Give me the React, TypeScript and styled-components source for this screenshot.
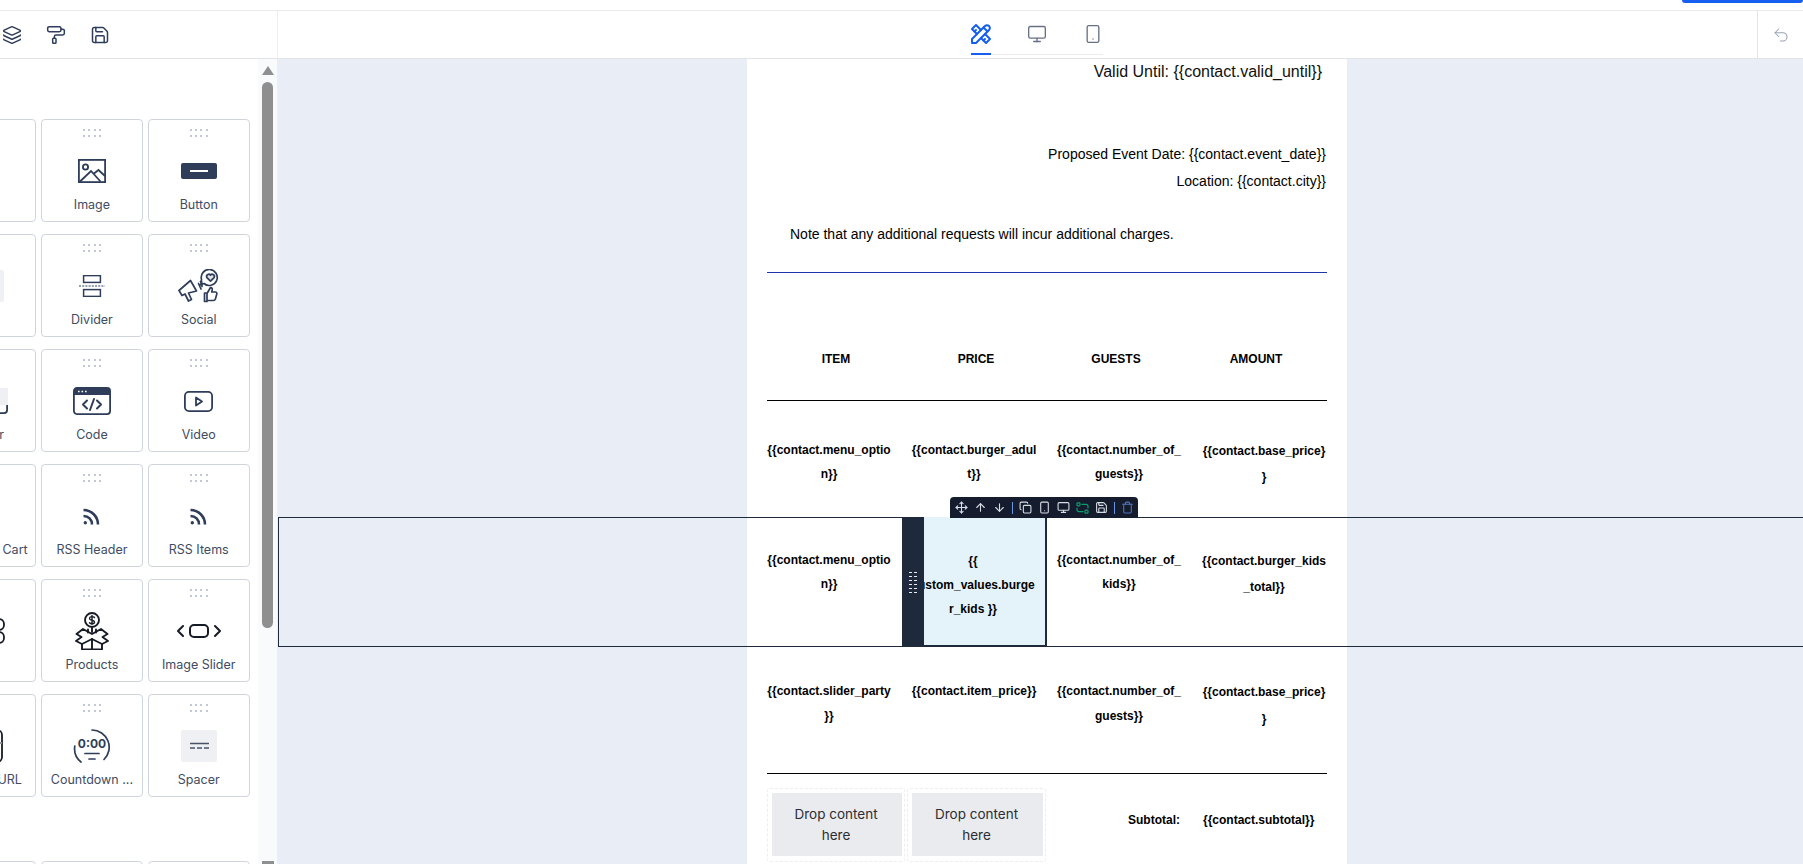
import React from "react";
import styled, { createGlobalStyle } from "styled-components";
import {
  ArrowDown,
  ArrowUp,
  Copy,
  Layers,
  Monitor,
  Move,
  PaintRoller,
  Save,
  Smartphone,
  Trash,
  Undo2,
} from "lucide-react";
import { TbTools } from "react-icons/tb";

const INK = "#2f3d5a";

const GlobalStyle = createGlobalStyle`
  html, body {
    margin: 0;
    padding: 0;
    background: #fff;
    overflow: hidden;
  }
  * {
    box-sizing: border-box;
  }
`;

const Page = styled.div`
  width: 1803px;
  height: 864px;
  display: flex;
  flex-direction: column;
  overflow: hidden;
  font-family: Inter, "Noto Sans", sans-serif;
`;

const TopStrip = styled.div`
  height: 11px;
  flex: none;
  display: flex;
  justify-content: flex-end;
  border-bottom: 1px solid #e9eaee;
`;

const PublishEdge = styled.div`
  width: 121px;
  height: 3px;
  background: #155eef;
  border-radius: 0 0 6px 6px;
`;

const Toolbar = styled.div`
  height: 48px;
  flex: none;
  display: grid;
  grid-template-columns: 278px 1fr 46px;
  border-bottom: 1px solid #e2e3e7;
`;

const LeftTools = styled.div`
  display: flex;
  align-items: center;
  gap: 24px;
  padding: 1px 0 0 2px;
  color: ${INK};
  border-right: 1px solid #eeeff2;
`;

const TabArea = styled.div`
  display: flex;
  padding-left: 693px;
`;

const TabBar = styled.div`
  height: 44px;
  display: flex;
  gap: 36px;
  border-bottom: 1px solid #eaecf0;
`;

const Tab = styled.div<{ $active?: boolean }>`
  width: 20px;
  height: 44px;
  padding-top: 3px;
  display: flex;
  align-items: center;
  justify-content: center;
  color: ${({ $active }) => ($active ? "#155eef" : "#667085")};
  border-bottom: 2px solid ${({ $active }) => ($active ? "#155eef" : "transparent")};
  & > svg {
    flex: none;
  }
`;

const UndoCell = styled.div`
  display: flex;
  align-items: center;
  justify-content: center;
  color: #98a2b3;
  border-left: 1px solid #e4e5e9;
`;

const Body = styled.div`
  flex: 1;
  min-height: 0;
  display: flex;
`;

const Sidebar = styled.aside`
  width: 278px;
  flex: none;
  display: flex;
  border-right: 1px solid #eeeff2;
`;

const Palette = styled.div`
  width: 258px;
  flex: none;
  overflow: hidden;
  padding-top: 60px;
`;

const CardGrid = styled.div`
  width: 316px;
  margin-left: -66px;
  display: grid;
  grid-template-columns: repeat(3, 102.3px);
  grid-auto-rows: 103px;
  column-gap: 4.5px;
  row-gap: 12px;
  & + & {
    margin-top: 64px;
  }
`;

const Card = styled.div`
  border: 1px solid #d0d5dd;
  border-radius: 4px;
  padding-top: 9px;
  display: flex;
  flex-direction: column;
  align-items: center;
  background: #fff;
`;

const Dots = styled.div`
  width: 18px;
  height: 8px;
  flex: none;
  display: grid;
  grid-template-columns: repeat(4, 2px);
  grid-template-rows: repeat(2, 2px);
  justify-content: space-between;
  align-content: space-between;
  & > i {
    background: #c2c8d5;
  }
`;

const IconSlot = styled.div`
  height: 52px;
  margin-top: 8px;
  flex: none;
  display: flex;
  align-items: center;
  justify-content: center;
`;

const CardLabel = styled.div`
  font-size: 12.5px;
  line-height: 16px;
  color: #414c63;
  white-space: nowrap;
`;

const GrayBlock = styled.div`
  width: 38px;
  height: 32px;
  background: #eef0f3;
  border-radius: 2px;
`;

const ScrollTrack = styled.div`
  width: 19px;
  flex: none;
  display: flex;
  flex-direction: column;
  align-items: center;
  background: #f9fafb;
  padding-top: 7px;
`;

const ArrowUpTip = styled.div`
  width: 0;
  height: 0;
  border-left: 6.5px solid transparent;
  border-right: 6.5px solid transparent;
  border-bottom: 9px solid #8f8f8f;
`;

const ScrollThumb = styled.div`
  width: 11px;
  height: 546px;
  margin-top: 7px;
  background: #8f8f8f;
  border-radius: 6px;
`;

const ScrollEnd = styled.div`
  width: 12px;
  height: 3px;
  margin-top: auto;
  background: #8f8f8f;
`;

const Canvas = styled.main`
  flex: 1;
  min-width: 0;
  overflow: hidden;
  background: #e9eef6;
`;

const Doc = styled.div`
  width: 600px;
  height: 805px;
  margin-left: 469px;
  padding-top: 1px;
  background: #fff;
  font-family: "Liberation Sans", Arial, sans-serif;
  color: #000;
`;

const ValidLine = styled.div`
  padding-right: 25px;
  text-align: right;
  font-size: 16px;
  line-height: 24px;
  color: #111;
`;

const EventBlock = styled.div`
  margin-top: 57px;
  padding-right: 21px;
  text-align: right;
  font-size: 14px;
  line-height: 27px;
`;

const Note = styled.p`
  margin: 27px 0 0;
  padding-left: 43px;
  font-size: 14px;
  line-height: 24px;
`;

const Rule = styled.hr<{ $color: string; $gap?: number }>`
  margin: ${({ $gap }) => $gap ?? 0}px 20px 0;
  border: 0;
  height: 1px;
  background: ${({ $color }) => $color};
`;

const HeadRow = styled.div`
  margin: 76px 20px 31px 19px;
  display: grid;
  grid-template-columns: repeat(4, 140px);
  text-align: center;
  font-size: 12px;
  font-weight: 700;
  line-height: 20px;
`;

const TableRow = styled.div<{ $height: number }>`
  position: relative;
  height: ${({ $height }) => $height}px;
  padding: 0 20px;
  display: grid;
  grid-template-columns: repeat(4, 124px);
  column-gap: 21px;
`;

const Cell = styled.div<{ $top: number; $lh: number }>`
  margin: 0 -1px;
  padding-top: ${({ $top }) => $top}px;
  text-align: center;
  font-size: 12px;
  font-weight: 700;
  line-height: ${({ $lh }) => $lh}px;
  overflow-wrap: anywhere;
`;

const ActiveCell = styled(Cell)`
  position: relative;
  margin: 0 -11px 0 -5px;
  padding-left: 4px;
  padding-right: 10px;
  background: #e3f3f9;
  border-right: 2px solid #1e293b;
  border-bottom: 2px solid #1e293b;
`;

const DragHandle = styled.div`
  position: absolute;
  top: 0;
  bottom: -2px;
  left: -5px;
  width: 22px;
  padding-top: 55px;
  background: #1e2a3b;
  display: grid;
  grid-template-columns: repeat(2, 3px);
  grid-auto-rows: 1px;
  column-gap: 2px;
  row-gap: 3px;
  justify-content: center;
  & > i {
    background: #e8edf3;
  }
`;

const RowFrame = styled.div`
  position: absolute;
  top: 0;
  bottom: 0;
  left: -469px;
  right: -456px;
  border-top: 1px solid #1e293b;
  border-bottom: 1px solid #1e293b;
  border-left: 1px solid #1e293b;
  pointer-events: none;
`;

const FloatingBar = styled.div`
  position: absolute;
  top: -20px;
  left: 203px;
  width: 188px;
  height: 21px;
  padding-left: 1.5px;
  display: flex;
  align-items: center;
  background: #141c2e;
  border-radius: 4px 4px 0 0;
  z-index: 2;
`;

const BarIcon = styled.span<{ $color?: string }>`
  width: 19px;
  flex: none;
  display: flex;
  justify-content: center;
  color: ${({ $color }) => $color ?? "#d9dee6"};
`;

const BarSep = styled.span`
  width: 1px;
  height: 12px;
  margin: 0 3px 0 3px;
  flex: none;
  background: #6b94e8;
`;

const TotalsRow = styled.div`
  padding: 0 0 0 20px;
  display: grid;
  grid-template-columns: 138px 139px 1fr;
  column-gap: 2px;
`;

const DropSlot = styled.div`
  margin-top: 14px;
  height: 74px;
  padding: 4px 2px 5px 4px;
  border: 1px dashed #eceef0;
  border-radius: 3px;
`;

const DropBox = styled.div`
  height: 100%;
  padding: 0 19px 0 17px;
  display: flex;
  align-items: center;
  justify-content: center;
  text-align: center;
  background: #eaebee;
  font-family: Inter, "Noto Sans", sans-serif;
  font-size: 13.5px;
  font-weight: 400;
  line-height: 21px;
  color: #2a2d33;
`;

const TotalsText = styled.div`
  padding-top: 36px;
  display: grid;
  grid-template-columns: 132px auto;
  column-gap: 23px;
  justify-content: start;
  font-size: 12px;
  font-weight: 700;
  line-height: 20px;
`;

const SubtotalLabel = styled.span`
  text-align: right;
`;

const ImageIcon = () => (
  <svg width="28" height="24" viewBox="0 0 28 24" fill="none" stroke={INK} strokeWidth="1.8">
    <rect x="0.9" y="0.9" width="26.2" height="22.2" />
    <circle cx="7.5" cy="8" r="2.6" />
    <path d="M2 22.5 13 12l9.5 10.5M16 14.5l4.5-3.5 6.5 6" />
  </svg>
);

const ButtonIcon = () => (
  <svg width="36" height="16" viewBox="0 0 36 16">
    <rect width="36" height="16" rx="2" fill={INK} />
    <rect x="9" y="7" width="18" height="2" fill="#fff" />
  </svg>
);

const DividerIcon = () => (
  <svg width="26" height="22" viewBox="0 0 26 22" fill="none" stroke={INK}>
    <rect x="4.6" y="0.6" width="16.8" height="6.8" strokeWidth="1.5" />
    <rect x="4.6" y="14.6" width="16.8" height="6.8" strokeWidth="1.5" />
    <path d="M0 11h26" strokeDasharray="2 1.2" strokeWidth="1.1" />
  </svg>
);

const SocialIcon = () => (
  <svg width="42" height="34" viewBox="0 0 42 34" fill="none" stroke={INK} strokeWidth="1.7" strokeLinejoin="round" strokeLinecap="round">
    <path d="M1 21.5 4 26.5l3-1.5 3.5 7 3-1.5-3-6.5 8-2L12.5 11.5Z" />
    <path d="M20.5 14.5 23 20M22.5 12.5c1 1.5 1.5 3.5 1.5 5" />
    <path d="M26 14.5a8 8 0 1 0-2.5-4 8 8 0 0 0 .3 3.5l-1.8 2Z" />
    <path d="M32.5 12.2 28.9 8.6a2.2 2.2 0 0 1 3.6-2.5 2.2 2.2 0 0 1 3.6 2.5Z" fill={INK} fillOpacity="0.15" />
    <path d="M29 24h-2.5v8.5H29Zm0 0.5 3.5-6c1.5 0 2 1 1.7 2.5l-.5 2h3.8c1 0 1.6 1 1.3 2l-1.4 5c-.3 1-1 1.5-2 1.5H29" />
  </svg>
);

const CodeIcon = () => (
  <svg width="38" height="28" viewBox="0 0 38 28" fill="none">
    <rect x="0.9" y="0.9" width="36.2" height="26.2" rx="3" stroke={INK} strokeWidth="1.8" />
    <path d="M0.9 8V3.9a3 3 0 0 1 3-3h30.2a3 3 0 0 1 3 3V8Z" fill={INK} />
    <path d="M5 4.5h1.6M8.5 4.5h1.6M12 4.5h1.6" stroke="#fff" strokeWidth="1.6" />
    <path d="M14 13.5l-4 4 4 4M24 13.5l4 4-4 4M21 12l-4 11" stroke={INK} strokeWidth="2" strokeLinecap="round" strokeLinejoin="round" />
  </svg>
);

const VideoIcon = () => (
  <svg width="29" height="21" viewBox="0 0 29 21" fill="none" stroke={INK} strokeWidth="1.8" strokeLinejoin="round">
    <rect x="0.9" y="0.9" width="27.2" height="19.2" rx="4" />
    <path d="M12 6.5v8l6-4Z" />
  </svg>
);

const RssIcon = () => (
  <svg width="17" height="17" viewBox="0 0 17 17" fill="none" stroke={INK} strokeWidth="2.6">
    <path d="M0.5 2C8.5 2 15 8.5 15 16.5" />
    <path d="M0.5 8C5.5 8 9 11.5 9 16.5" />
    <circle cx="2.3" cy="14.8" r="1.7" fill={INK} stroke="none" />
  </svg>
);

const ProductsIcon = () => (
  <svg width="34" height="38" viewBox="0 0 34 38" fill="none" stroke="#161b26" strokeWidth="1.9" strokeLinejoin="round" strokeLinecap="round">
    <circle cx="17" cy="8" r="7" />
    <path d="M19.5 5.5c-1-1.2-5-1.3-5 .9 0 2.5 5 1.2 5 3.5 0 2.2-4 2.1-5 .8M17 3.5v9" strokeWidth="1.4" />
    <path d="M8 17 1.5 22l5 3L1 29l6 3 10-5 10 5 6-3-5.5-4 5-3L26 17l-9 5-9-5Z" />
    <path d="M7 32v5.5h20V32M17 27v10.5M13 17.5v3M17 16v4M21 17.5v3" />
  </svg>
);

const SliderIcon = () => (
  <svg width="44" height="14" viewBox="0 0 44 14" fill="none" stroke="#161b26" strokeWidth="2" strokeLinecap="round" strokeLinejoin="round">
    <path d="M6 2 1 7l5 5M38 2l5 5-5 5" />
    <rect x="13" y="1" width="18" height="12" rx="4" />
  </svg>
);

const CountdownIcon = () => (
  <svg width="38" height="35" viewBox="0 0 38 35" fill="none" stroke={INK} strokeWidth="1.7" strokeLinecap="round">
    <path d="M19 1A17.2 17.2 0 0 1 31 30.5M8 33A17.2 17.2 0 0 1 1.8 17" />
    <text x="19" y="19" textAnchor="middle" fontFamily="Inter, sans-serif" fontSize="12" fontWeight="700" fill={INK} stroke="none">
      0:00
    </text>
    <path d="M12 24.5h14M16 30h6" />
  </svg>
);

const SpacerIcon = () => (
  <svg width="36" height="32" viewBox="0 0 36 32">
    <rect width="36" height="32" rx="2" fill="#eef0f3" />
    <path d="M9 13.5h19" stroke="#475467" strokeWidth="1.5" />
    <path d="M9 18h19" stroke="#475467" strokeWidth="1.5" strokeDasharray="5 2" />
  </svg>
);

const HeaderIcon = () => (
  <svg width="46" height="26" viewBox="0 0 46 26" fill="none">
    <rect x="0.9" y="0.9" width="44.2" height="24.2" rx="3" stroke={INK} strokeWidth="1.8" />
    <rect x="0" y="0" width="46" height="17" fill="#eef0f3" />
  </svg>
);

const LinkedIcon = () => (
  <svg width="40" height="26" viewBox="0 0 40 26" fill="none" stroke="#161b26" strokeWidth="1.8">
    <rect x="26" y="1" width="13" height="11" rx="5" />
    <rect x="26" y="14" width="13" height="11" rx="5" />
  </svg>
);

const UrlIcon = () => (
  <svg width="36" height="34" viewBox="0 0 36 34" fill="none" stroke="#161b26" strokeWidth="1.8">
    <rect x="1" y="1" width="34" height="32" rx="5" />
    <path d="M28 14h7" stroke="#8a8f99" />
  </svg>
);

const ConnectIcon = () => (
  <svg width="13" height="12" viewBox="0 0 13 12" fill="none" stroke="#0e9f6e" strokeWidth="1.2" strokeLinecap="round">
    <rect x="1" y="0.8" width="3" height="3" rx="0.8" />
    <rect x="9" y="8.2" width="3" height="3" rx="0.8" />
    <path d="M6 2.3h4a2 2 0 0 1 2 2v1.5M7 9.7H3a2 2 0 0 1-2-2V6.2" />
  </svg>
);

type CardItem = { label: string; icon?: React.ReactNode };

const firstCards: CardItem[] = [
  { label: "" },
  { label: "Image", icon: <ImageIcon /> },
  { label: "Button", icon: <ButtonIcon /> },
  { label: "", icon: <GrayBlock /> },
  { label: "Divider", icon: <DividerIcon /> },
  { label: "Social", icon: <SocialIcon /> },
  { label: "Footer", icon: <HeaderIcon /> },
  { label: "Code", icon: <CodeIcon /> },
  { label: "Video", icon: <VideoIcon /> },
  { label: "Shopping Cart" },
  { label: "RSS Header", icon: <RssIcon /> },
  { label: "RSS Items", icon: <RssIcon /> },
  { label: "", icon: <LinkedIcon /> },
  { label: "Products", icon: <ProductsIcon /> },
  { label: "Image Slider", icon: <SliderIcon /> },
  { label: "Custom URL", icon: <UrlIcon /> },
  { label: "Countdown ...", icon: <CountdownIcon /> },
  { label: "Spacer", icon: <SpacerIcon /> },
];

const dragDots = Array.from({ length: 8 });
const handleDots = Array.from({ length: 12 });

function PaletteCard({ label, icon }: CardItem) {
  return (
    <Card>
      <Dots>
        {dragDots.map((_, i) => (
          <i key={i} />
        ))}
      </Dots>
      <IconSlot>{icon}</IconSlot>
      <CardLabel>{label}</CardLabel>
    </Card>
  );
}

export default function App() {
  return (
    <Page>
      <GlobalStyle />
      <TopStrip>
        <PublishEdge />
      </TopStrip>
      <Toolbar>
        <LeftTools>
          <Layers size={20} strokeWidth={1.8} />
          <PaintRoller size={20} strokeWidth={1.8} />
          <Save size={20} strokeWidth={1.8} />
        </LeftTools>
        <TabArea>
          <TabBar>
            <Tab $active>
              <TbTools size={24} />
            </Tab>
            <Tab>
              <Monitor size={20} strokeWidth={1.6} />
            </Tab>
            <Tab>
              <Smartphone size={20} strokeWidth={1.6} />
            </Tab>
          </TabBar>
        </TabArea>
        <UndoCell>
          <Undo2 size={18} strokeWidth={1.4} />
        </UndoCell>
      </Toolbar>
      <Body>
        <Sidebar>
          <Palette>
            <CardGrid>
              {firstCards.map((c, i) => (
                <PaletteCard key={i} {...c} />
              ))}
            </CardGrid>
            <CardGrid>
              <PaletteCard label="" />
              <PaletteCard label="" />
              <PaletteCard label="" />
            </CardGrid>
          </Palette>
          <ScrollTrack>
            <ArrowUpTip />
            <ScrollThumb />
            <ScrollEnd />
          </ScrollTrack>
        </Sidebar>
        <Canvas>
          <Doc>
            <ValidLine>Valid Until: {"{{contact.valid_until}}"}</ValidLine>
            <EventBlock>
              Proposed Event Date: {"{{contact.event_date}}"}
              <br />
              Location: {"{{contact.city}}"}
            </EventBlock>
            <Note>Note that any additional requests will incur additional charges.</Note>
            <Rule $color="#1d35b0" $gap={26} />
            <HeadRow>
              <div>ITEM</div>
              <div>PRICE</div>
              <div>GUESTS</div>
              <div>AMOUNT</div>
            </HeadRow>
            <Rule $color="#000" />
            <TableRow $height={116}>
              <Cell $top={37} $lh={24}>{"{{contact.menu_option}}"}</Cell>
              <Cell $top={37} $lh={24}>{"{{contact.burger_adult}}"}</Cell>
              <Cell $top={37} $lh={24}>{"{{contact.number_of_guests}}"}</Cell>
              <Cell $top={37} $lh={26}>{"{{contact.base_price}}"}</Cell>
            </TableRow>
            <TableRow $height={130}>
              <RowFrame />
              <FloatingBar>
                <BarIcon><Move size={13} /></BarIcon>
                <BarIcon><ArrowUp size={13} /></BarIcon>
                <BarIcon><ArrowDown size={13} /></BarIcon>
                <BarSep />
                <BarIcon><Copy size={13} /></BarIcon>
                <BarIcon><Smartphone size={13} /></BarIcon>
                <BarIcon><Monitor size={13} /></BarIcon>
                <BarIcon><ConnectIcon /></BarIcon>
                <BarIcon><Save size={13} /></BarIcon>
                <BarSep />
                <BarIcon $color="#4f73b8"><Trash size={13} /></BarIcon>
              </FloatingBar>
              <Cell $top={31} $lh={24}>{"{{contact.menu_option}}"}</Cell>
              <ActiveCell $top={32} $lh={24}>
                <DragHandle>
                  {handleDots.map((_, i) => (
                    <i key={i} />
                  ))}
                </DragHandle>
                {"{{ custom_values.burger_kids }}"}
              </ActiveCell>
              <Cell $top={31} $lh={24}>{"{{contact.number_of_kids}}"}</Cell>
              <Cell $top={31} $lh={26}>{"{{contact.burger_kids_total}}"}</Cell>
            </TableRow>
            <TableRow $height={126}>
              <Cell $top={32} $lh={25}>{"{{contact.slider_party}}"}</Cell>
              <Cell $top={32} $lh={25}>{"{{contact.item_price}}"}</Cell>
              <Cell $top={32} $lh={25}>{"{{contact.number_of_guests}}"}</Cell>
              <Cell $top={32} $lh={27}>{"{{contact.base_price}}"}</Cell>
            </TableRow>
            <Rule $color="#000" />
            <TotalsRow>
              <DropSlot>
                <DropBox>Drop content here</DropBox>
              </DropSlot>
              <DropSlot>
                <DropBox>Drop content here</DropBox>
              </DropSlot>
              <TotalsText>
                <SubtotalLabel>Subtotal:</SubtotalLabel>
                <span>{"{{contact.subtotal}}"}</span>
              </TotalsText>
            </TotalsRow>
          </Doc>
        </Canvas>
      </Body>
    </Page>
  );
}
